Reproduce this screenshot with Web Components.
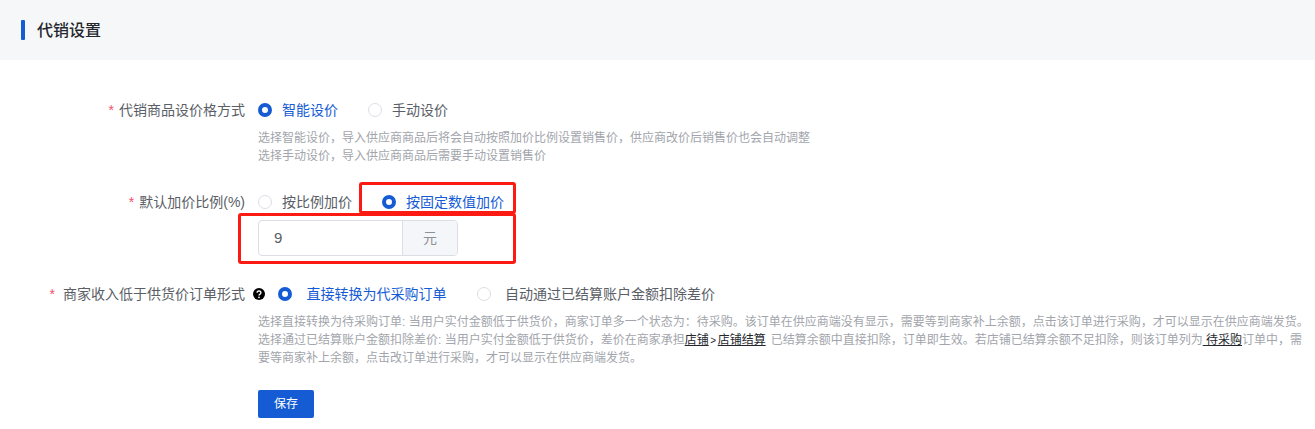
<!DOCTYPE html>
<html lang="zh">
<head>
<meta charset="utf-8">
<title>代销设置</title>
<style>
  html, body { margin: 0; background: #fff; }
  body { font-family: "Liberation Sans", "Noto Sans CJK SC", sans-serif; }
</style>
</head>
<body>
<settings-page>
  <section-title slot="title">代销设置</section-title>

  <form-row required label="代销商品设价格方式">
    <radio-option checked>智能设价</radio-option>
    <radio-option>手动设价</radio-option>
    <help-text slot="below">选择智能设价，导入供应商商品后将会自动按照加价比例设置销售价，供应商改价后销售价也会自动调整<br>选择手动设价，导入供应商商品后需要手动设置销售价</help-text>
  </form-row>

  <form-row required label="默认加价比例(%)">
    <radio-option>按比例加价</radio-option>
    <radio-option checked>按固定数值加价</radio-option>
    <addon-input slot="below" value="9">元</addon-input>
  </form-row>

  <form-row required wide-star label="商家收入低于供货价订单形式" style="--radio-gap:14.5px">
    <help-icon></help-icon>
    <radio-option checked>直接转换为代采购订单</radio-option>
    <radio-option>自动通过已结算账户金额扣除差价</radio-option>
    <help-text slot="below">选择直接转换为待采购订单: 当用户实付金额低于供货价，商家订单多一个状态为：待采购。该订单在供应商端没有显示，需要等到商家补上余额，点击该订单进行采购，才可以显示在供应商端发货。<br>选择通过已结算账户金额扣除差价: 当用户实付金额低于供货价，差价在商家承担<a>店铺<span style="display:inline-block;width:9px;line-height:1;text-align:center;font-size:10px">&gt;</span>店铺结算</a><span style="margin-left:5px">已结算余额中直接扣除，订单即生效。若店铺已结算余额不足扣除，则该订单列为</span><a>&nbsp;待采购</a>订单中，需<br>要等商家补上余额，点击改订单进行采购，才可以显示在供应商端发货。</help-text>
  </form-row>

  <form-row>
    <save-button>保存</save-button>
  </form-row>

  <mark-box style="left:359px;top:182px;width:151px;height:26px"></mark-box>
  <mark-box style="left:238px;top:213px;width:272px;height:45px"></mark-box>
</settings-page>

<script>
class SettingsPage extends HTMLElement {
  constructor() {
    super();
    this.attachShadow({ mode: 'open' }).innerHTML = `
      <style>
        :host { display: block; position: relative; width: 1315px; height: 429px; overflow: hidden; background: #fff; }
        .head { height: 60px; background: #f6f7f9; display: flex; align-items: center; padding-left: 21px; }
        .body { padding-top: 40px; display: flex; flex-direction: column; gap: 28px; }
        ::slotted(form-row:last-of-type) { margin-top: -4px; }
      </style>
      <div class="head"><slot name="title"></slot></div>
      <div class="body"><slot></slot></div>`;
  }
}

class SectionTitle extends HTMLElement {
  constructor() {
    super();
    this.attachShadow({ mode: 'open' }).innerHTML = `
      <style>
        :host { display: flex; align-items: center; gap: 12px; font-size: 16px; font-weight: 500; color: #24272c; line-height: 20px; }
        i { width: 4px; height: 20px; border-radius: 1px; background: #155bd4; }
        span { padding-top: 2px; }
      </style>
      <i></i><span><slot></slot></span>`;
  }
}

class FormRow extends HTMLElement {
  constructor() {
    super();
    const label = this.getAttribute('label');
    const star = this.hasAttribute('required') ? '<b>*</b>' : '';
    this.attachShadow({ mode: 'open' }).innerHTML = `
      <style>
        :host { display: grid; grid-template-columns: 245px 1fr; column-gap: 13px; font-size: 14px; line-height: 20px; color: #5a5e66; }
        .label { text-align: right; white-space: nowrap; }
        b { font-weight: 400; color: #f4516c; margin-right: 5px; }
        :host([wide-star]) b { margin-right: 8px; }
        .main { display: flex; align-items: center; gap: 30px; min-height: 20px; }
        ::slotted(addon-input) { margin-top: 8px; }
        ::slotted(help-text) { margin: 9px 0 -1px; }
      </style>
      <div class="label">${label ? star + label : ''}</div>
      <div>
        <div class="main"><slot></slot></div>
        <slot name="below"></slot>
      </div>`;
  }
}

class RadioOption extends HTMLElement {
  constructor() {
    super();
    this.attachShadow({ mode: 'open' }).innerHTML = `
      <style>
        :host { display: inline-flex; align-items: center; gap: var(--radio-gap, 10px); font-size: 14px; line-height: 20px; color: #5a5e66; white-space: nowrap; }
        :host([checked]) { color: #155bd4; }
        i { width: 14px; height: 14px; box-sizing: border-box; border: 1px solid #dcdee5; border-radius: 50%; background: #fff; flex: none; }
        :host([checked]) i { border: 4.5px solid #155bd4; }
      </style>
      <i></i><span><slot></slot></span>`;
  }
}

class HelpText extends HTMLElement {
  constructor() {
    super();
    this.attachShadow({ mode: 'open' }).innerHTML = `
      <style>
        :host { display: block; font-size: 12px; line-height: 18px; color: #a2a5ab; white-space: nowrap; }
        ::slotted(a) { color: #24272c; text-decoration: underline; }
      </style>
      <slot></slot>`;
  }
}

class AddonInput extends HTMLElement {
  constructor() {
    super();
    const value = this.getAttribute('value') || '';
    this.attachShadow({ mode: 'open' }).innerHTML = `
      <style>
        :host { display: flex; width: 200px; height: 36px; box-sizing: border-box; border: 1px solid #dcdee5; border-radius: 4px; font-size: 14px; color: #5a5e66; overflow: hidden; }
        input { flex: 1; min-width: 0; border: 0; outline: 0; padding: 0 15px; font: inherit; font-size: 15px; color: inherit; background: transparent; margin-top: -1px; }
        span { width: 54px; border-left: 1px solid #dcdee5; background: #f5f6fa; display: flex; align-items: center; justify-content: center; color: #8d9095; }
      </style>
      <input value="${value}"><span><slot></slot></span>`;
  }
}

class HelpIcon extends HTMLElement {
  constructor() {
    super();
    this.attachShadow({ mode: 'open' }).innerHTML = `
      <style>
        :host { display: block; width: 12px; height: 12px; margin: 0 -17px 0 -5px; }
        svg { display: block; }
      </style>
      <svg width="12" height="12" viewBox="0 0 12 12">
        <circle cx="6" cy="6" r="6" fill="#000"/>
        <path d="M4.1 4.7a1.9 1.7 0 1 1 2.9 1.4c-.7.4-1 .7-1 1.4" fill="none" stroke="#fff" stroke-width="1.4"/>
        <circle cx="6" cy="9.3" r=".85" fill="#fff"/>
      </svg>`;
  }
}

class SaveButton extends HTMLElement {
  constructor() {
    super();
    this.attachShadow({ mode: 'open' }).innerHTML = `
      <style>
        :host { display: flex; align-items: center; justify-content: center; width: 56px; height: 28px; border-radius: 2px; background: #155bd4; color: #fff; font-size: 12px; }
      </style>
      <slot></slot>`;
  }
}

class MarkBox extends HTMLElement {
  constructor() {
    super();
    this.attachShadow({ mode: 'open' }).innerHTML = `
      <style>
        :host { display: block; position: absolute; border: 3px solid #fb1b12; border-radius: 3px; pointer-events: none; }
      </style>`;
  }
}

customElements.define('settings-page', SettingsPage);
customElements.define('section-title', SectionTitle);
customElements.define('form-row', FormRow);
customElements.define('radio-option', RadioOption);
customElements.define('help-text', HelpText);
customElements.define('addon-input', AddonInput);
customElements.define('help-icon', HelpIcon);
customElements.define('save-button', SaveButton);
customElements.define('mark-box', MarkBox);
</script>
</body>
</html>
